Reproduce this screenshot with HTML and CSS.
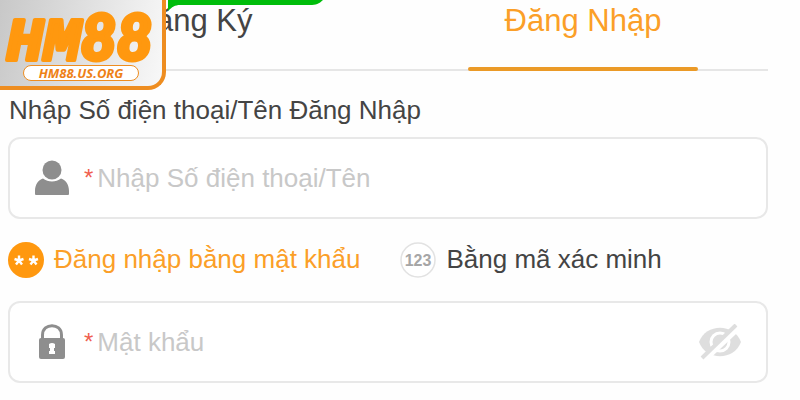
FILE: index.html
```html
<!DOCTYPE html>
<html lang="vi">
<head>
    <meta charset="UTF-8">
    <meta name="viewport" content="width=device-width, initial-scale=1.0">
    <title>Đăng Nhập</title>
    <link rel="stylesheet" href="styles.css">
</head>
<body>
    <a href="#" class="logo">
        <svg class="logo-mark" viewBox="0 0 150 57">
            <text x="0" y="52"><tspan class="logo-letters">HM</tspan><tspan class="logo-digits">88</tspan></text>
        </svg>
        <span class="logo-site">HM88.US.ORG</span>
    </a>
    <svg class="bubble" viewBox="0 0 156 12" aria-hidden="true">
        <path d="M0 0H155C151 4 148 5 142 5H12C7 5 4 7 0 11Z" fill="#00bd0b"/>
    </svg>

    <main class="login">
        <nav class="tabs">
            <a href="#" class="tab">Đăng Ký</a>
            <a href="#" class="tab active">Đăng Nhập</a>
        </nav>

        <form class="login-form">
            <label class="field-title" for="account">Nhập Số điện thoại/Tên Đăng Nhập</label>
            <div class="field">
                <svg class="field-icon" viewBox="0 0 36 36" aria-hidden="true">
                    <circle cx="18" cy="10" r="9.5"/>
                    <path d="M1 34V31C1 25 4 20 9 18.500C14 22.500 22 22.500 27 18.500C32 20 35 25 35 31V34Q35 35 34 35H2Q1 35 1 34Z"/>
                </svg>
                <span class="required">*</span>
                <input type="text" id="account" name="account" placeholder="Nhập Số điện thoại/Tên">
            </div>

            <div class="methods">
                <label class="method">
                    <input type="radio" name="method" value="password" checked>
                    <svg class="method-icon" viewBox="0 0 36 36" aria-hidden="true">
                        <circle cx="18" cy="18" r="18" fill="#ff980f"/>
                        <path d="M11 18.500V13.500M11 18.500L6.500 17M11 18.500L15.500 17M11 18.500L8 22.500M11 18.500L14 22.500M25.500 18.500V13.500M25.500 18.500L21 17M25.500 18.500L30 17M25.500 18.500L22.500 22.500M25.500 18.500L28.500 22.500" fill="none" stroke="#fff" stroke-width="2.4"/>
                    </svg>
                    <span>Đăng nhập bằng mật khẩu</span>
                </label>
                <label class="method">
                    <input type="radio" name="method" value="code">
                    <svg class="method-icon" viewBox="0 0 36 36" aria-hidden="true">
                        <circle cx="18" cy="18" r="17" fill="#fff" stroke="#e2e2e2" stroke-width="1.5"/>
                        <text x="18" y="24" text-anchor="middle">123</text>
                    </svg>
                    <span>Bằng mã xác minh</span>
                </label>
            </div>

            <div class="field">
                <svg class="field-icon" viewBox="0 0 36 36" aria-hidden="true">
                    <path d="M8.500 16V11C8.500 -1.500 27.500 -1.500 27.500 11V16" fill="none" stroke="#8e8e8e" stroke-width="3"/>
                    <rect x="5" y="14" width="26" height="21" rx="2"/>
                    <path d="M15 20Q18 18 21 20V24H20V27H21V30H15V27H16V24H15Z" fill="#fff"/>
                </svg>
                <span class="required">*</span>
                <input type="password" id="password" name="password" placeholder="Mật khẩu" aria-label="Mật khẩu">
                <button type="button" class="toggle" aria-label="Hiện mật khẩu">
                    <svg viewBox="0 0 44 36" aria-hidden="true">
                        <path d="M1 18C8 -1 36 -1 43 18C36 37 8 37 1 18Z" fill="#dedede"/>
                        <circle cx="22" cy="18" r="9" fill="none" stroke="#fff" stroke-width="3"/>
                        <path d="M5 37L40 4" stroke="#fff" stroke-width="6"/>
                        <path d="M4 34L38 1" stroke="#dedede" stroke-width="4"/>
                    </svg>
                </button>
            </div>
        </form>
    </main>
</body>
</html>
```
FILE: styles.css
```css
* {
    box-sizing: border-box;
}
body {
    margin: 0;
    background: #fefefe;
    color: #444;
    font-family: "Liberation Sans", Arial, sans-serif;
    font-size: 26px;
    line-height: 32px;
}
a {
    text-decoration: none;
}
.login {
    padding: 0 32px 16px 8px;
}
.tabs {
    display: grid;
    grid-template-columns: 1fr 1fr;
    column-gap: 20px;
    height: 71px;
    border-bottom: 2px solid #e6e6e6;
}
.tab {
    position: relative;
    padding-top: 5px;
    color: #444;
    font-size: 31px;
    text-align: center;
}
.tab.active {
    color: #fb9f28;
}
.tab.active::after {
    content: "";
    position: absolute;
    left: 19%;
    right: 19%;
    bottom: -2px;
    height: 4px;
    border-radius: 2px;
    background: #eb9a27;
}
.field-title {
    display: block;
    padding: 23px 0 11px 1px;
}
.field {
    display: flex;
    align-items: center;
    height: 82px;
    padding: 0 24px;
    border: 2px solid #e8e8e8;
    border-radius: 12px;
    background: #fff;
}
.field-icon {
    flex: none;
    width: 36px;
    height: 36px;
    fill: #8e8e8e;
}
.required {
    margin: 0 4px 0 14px;
    color: #f0604f;
    font-size: 24px;
}
.field input {
    flex: 1;
    min-width: 0;
    padding: 0;
    border: none;
    outline: none;
    background: none;
    color: #444;
    font: inherit;
}
.field input::placeholder {
    color: #c8c8c8;
    opacity: 1;
}
.toggle {
    width: 44px;
    height: 36px;
    padding: 0;
    border: none;
    background: none;
    cursor: pointer;
}
.toggle svg {
    display: block;
}
.methods {
    display: flex;
    gap: 40px;
    padding: 23px 0;
}
.method {
    display: flex;
    align-items: center;
    gap: 10px;
    cursor: pointer;
}
.method input {
    position: absolute;
    opacity: 0;
}
.method span {
    padding-bottom: 3px;
}
.method-icon {
    width: 36px;
    height: 36px;
}
.method-icon text {
    fill: #a6a6a6;
    font-size: 16px;
    font-weight: bold;
}
.method input:checked ~ span {
    color: #fb9f28;
}
.logo {
    position: absolute;
    top: 0;
    left: 0;
    z-index: 2;
    display: flex;
    flex-direction: column;
    align-items: center;
    width: 166px;
    height: 90px;
    padding-top: 8px;
    border-right: 4px solid #ee8d20;
    border-bottom: 4px solid #ee8d20;
    border-radius: 0 0 18px 0;
    background: linear-gradient(100deg, #c8c8c8, #f8f8f8);
}
.logo-mark {
    width: 150px;
    height: 57px;
    overflow: visible;
    fill: #ff980f;
    stroke: #ff980f;
    stroke-linejoin: round;
}
.logo-letters {
    font: italic bold 62px "Liberation Mono", monospace;
    stroke-width: 4px;
}
.logo-digits {
    font: italic 900 62px Lato, sans-serif;
    stroke-width: 4px;
}
.logo-site {
    width: 116px;
    border: 1px solid #ee8d20;
    border-radius: 8px;
    background: #fff;
    color: #ee8117;
    font: italic bold 13px/14px "Open Sans", sans-serif;
    text-align: center;
}
.bubble {
    position: absolute;
    top: 0;
    left: 168px;
    z-index: 1;
    width: 156px;
    height: 12px;
}
```
